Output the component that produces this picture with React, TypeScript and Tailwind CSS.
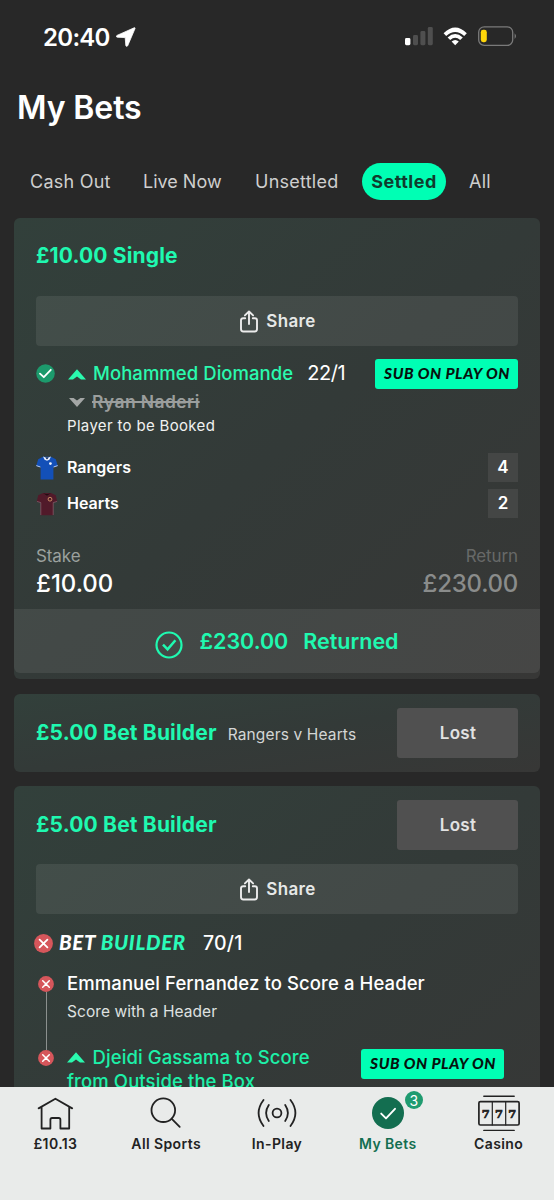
import React from 'react';

const LocationArrow = () => (
  <svg width="20" height="20" viewBox="0 0 20 20" className="ml-[6px]">
    <path d="M18.2 0.8L1 8.4C0 8.9 0.2 10.1 1.3 10.2L9.2 10.6L9.8 18.4C9.9 19.5 11.2 19.7 11.7 18.7L19 1.6C19.3 0.9 18.8 0.5 18.2 0.8Z" fill="#fff" stroke="#fff" strokeWidth="0.8" strokeLinejoin="round" />
  </svg>
);

const StatusIcons = () => (
  <svg width="112" height="22" viewBox="0 0 112 22">
    <rect x="0" y="12" width="5.4" height="7.2" rx="1.4" fill="#fff" />
    <rect x="8" y="9" width="5" height="10.2" rx="1.4" fill="#4f4f4f" />
    <rect x="15.4" y="5" width="5" height="14.2" rx="1.4" fill="#4f4f4f" />
    <rect x="22.8" y="1" width="5" height="18.2" rx="1.4" fill="#4f4f4f" />
    <path d="M38.6 7.2Q50.2 -4 61.8 7.2L59.2 9.9Q50.2 1.9 41.2 9.9Z" fill="#fff" />
    <path d="M42.6 11.4Q50.2 4.6 57.8 11.4L55.2 14.1Q50.2 9.6 45.2 14.1Z" fill="#fff" />
    <path d="M46.6 15.5Q50.2 12.4 53.8 15.5L50.2 19.2Z" fill="#fff" />
    <rect x="73.7" y="0.8" width="34" height="18.6" rx="5.5" fill="none" stroke="#7a7a7a" strokeWidth="1.3" />
    <path d="M109.6 7.2Q112.4 10 109.6 13Z" fill="#7a7a7a" />
    <rect x="75.8" y="3.8" width="6" height="12.4" rx="2.4" fill="#ffd60a" />
  </svg>
);

const ShareIcon = () => (
  <svg width="18" height="23" viewBox="0 0 18 23" fill="none" stroke="#ececec" strokeWidth="1.9" strokeLinecap="round" strokeLinejoin="round">
    <path d="M5.2 8.2H3.2C1.8 8.2 1 8.9 1 10.3V19C1 20.6 1.8 21.5 3.4 21.5H14.6C16.2 21.5 17 20.6 17 19V10.3C17 8.9 16.2 8.2 14.8 8.2H12.8" />
    <path d="M9 14V1.8M4.9 5.4L9 1.5L13.1 5.4" />
  </svg>
);

const UpArrow = () => (
  <svg width="18" height="11" viewBox="0 0 18 11" className="shrink-0">
    <path d="M9 0.3L18 10.4H13L9 7.6L5 10.4H0Z" fill="#2af9ae" />
  </svg>
);

const DownArrow = () => (
  <svg width="16" height="9" viewBox="0 0 16 9" className="shrink-0">
    <path d="M8 9L0 0H4.6L8 2.4L11.4 0H16Z" fill="#a3a6a5" />
  </svg>
);

const WonIcon = () => (
  <svg width="19" height="19" viewBox="0 0 19 19" className="-mt-[2px] shrink-0">
    <circle cx="9.5" cy="9.5" r="9.3" fill="#1c9a6c" />
    <path d="M4 9.6L7.8 13.2L14.8 5.8" fill="none" stroke="#fff" strokeWidth="1.8" strokeLinecap="round" strokeLinejoin="round" />
  </svg>
);

const LostIcon = ({ className }: { className: string }) => (
  <svg viewBox="0 0 19 19" className={className}>
    <circle cx="9.5" cy="9.5" r="9.4" fill="#d6565b" />
    <path d="M5.6 5.6L13.4 13.4M13.4 5.6L5.6 13.4" stroke="#fff" strokeWidth="1.8" strokeLinecap="round" />
  </svg>
);

const RangersKit = () => (
  <svg width="22" height="24" viewBox="0 0 22 24">
    <path d="M7 0.8L2.2 3.2L0.2 10L4.6 11.2V23.4H17.4V11.2L21.8 10L19.8 3.2L15 0.8Z" fill="#1350b8" />
    <path d="M7 0.6Q11 2.8 15 0.6L13.4 3.8L11 4.8L8.6 3.8Z" fill="#e8eefb" />
    <path d="M9.3 1.6H12.7L11 3.4Z" fill="#12264f" />
    <path d="M0.3 9.6L4.4 11M21.7 9.6L17.6 11" stroke="#c9d8f5" strokeWidth="0.9" />
    <circle cx="14.4" cy="7.6" r="1.4" fill="#eef3ff" />
  </svg>
);

const HeartsKit = () => (
  <svg width="22" height="24" viewBox="0 0 22 24">
    <path d="M7 1L2.2 3.2L0.8 9.6L4.8 10.6V23.2H17.2V10.6L21.2 9.6L19.8 3.2L15 1Z" fill="#511a2a" />
    <path d="M7 1Q11 3.2 15 1L11 3.8Z" fill="#230b12" />
    <path d="M0.9 9.4L4.8 10.6V23M21.1 9.4L17.2 10.6V23" stroke="#8f6070" strokeWidth="0.7" fill="none" />
    <circle cx="14" cy="7.2" r="1.9" fill="none" stroke="#c98a62" strokeWidth="1" />
  </svg>
);

const SubBadge = ({ className = '' }: { className?: string }) => (
  <span className={`flex h-[30px] w-[143px] shrink-0 items-center justify-center rounded-[3px] bg-[#00ffb4] pl-px font-['Lato'] text-[15.5px] font-black italic tracking-[0.5px] whitespace-nowrap text-[#07120e] ${className}`}>
    SUB ON PLAY ON
  </span>
);

const ShareButton = ({ className = '' }: { className?: string }) => (
  <button className={`flex h-[50px] w-full items-center justify-center gap-[8px] rounded-[4px] bg-white/8 pl-[2px] text-[17px] font-semibold tracking-[0.35px] text-[#e6e8e7] ${className}`}>
    <ShareIcon />
    <span className="pt-[2px]">Share</span>
  </button>
);

const LostButton = () => (
  <button className="ml-auto flex h-[50px] w-[121px] items-center justify-center rounded-[3px] bg-[#505050] pt-[2px] pl-px text-[17px] font-semibold tracking-[0.3px] text-[#e2e2e2]">
    Lost
  </button>
);

const teams = [
  { name: 'Rangers', score: 4, kit: <RangersKit /> },
  { name: 'Hearts', score: 2, kit: <HeartsKit /> },
];

const navItems = [
  {
    label: '£10.13',
    icon: (
      <svg width="44" height="38" viewBox="0 0 44 38" fill="none" stroke="#222" strokeWidth="1.8" strokeLinecap="round" strokeLinejoin="round">
        <path d="M5.6 14.4L22.4 4.7L39.2 14.4M8.6 13.2V34.5H17.4V25.7Q17.4 24 19.1 24H25.7Q27.4 24 27.4 25.7V34.5H36.2V13.2" />
      </svg>
    ),
  },
  {
    label: 'All Sports',
    icon: (
      <svg width="44" height="38" viewBox="0 0 44 38" fill="none" stroke="#222" strokeWidth="1.8" strokeLinecap="round">
        <circle cx="19.3" cy="16.2" r="11.8" />
        <path d="M27.8 24.8L35.7 32.8" />
      </svg>
    ),
  },
  {
    label: 'In-Play',
    icon: (
      <svg width="44" height="38" viewBox="0 0 44 38" fill="none" stroke="#222" strokeWidth="1.8" strokeLinecap="round">
        <circle cx="22" cy="19" r="4.4" />
        <path d="M13.8 11Q8.4 19 13.8 27M30.2 11Q35.6 19 30.2 27M8.5 6Q-1.3 19 8.5 32M35.5 6Q45.3 19 35.5 32" />
      </svg>
    ),
  },
  {
    label: 'My Bets',
    active: true,
    badge: 3,
    icon: (
      <svg width="44" height="38" viewBox="0 0 44 38">
        <circle cx="22" cy="19" r="16" fill="#136e50" />
        <path d="M15.2 19.6L20 24.4L29 14.8" fill="none" stroke="#fff" strokeWidth="1.9" strokeLinecap="round" strokeLinejoin="round" />
      </svg>
    ),
  },
  {
    label: 'Casino',
    icon: (
      <svg width="44" height="38" viewBox="0 0 44 38" fill="none" stroke="#222" strokeWidth="1.7" strokeLinecap="round">
        <path d="M6.8 2.2H37.2M6.8 36.4H37.2" strokeWidth="1.4" />
        <rect x="1.9" y="7.6" width="40.2" height="23.4" rx="1.5" />
        <path d="M15.3 7.6V31M28.7 7.6V31" strokeWidth="1.2" />
        <g fill="#222" stroke="#222" strokeWidth="0.7" className="font-['DejaVu_Serif',serif] text-[11.5px] font-bold tracking-normal" textAnchor="middle">
          <text x="8.7" y="23.6">7</text>
          <text x="22" y="23.6">7</text>
          <text x="35.3" y="23.6">7</text>
        </g>
      </svg>
    ),
  },
];

const cardClass = 'mx-[14px] rounded-[6px] bg-linear-to-br from-[#32403b] via-[#333a38] to-[#373736] text-white';

export default function App() {
  return (
    <div className="flex h-[1200px] w-[554px] flex-col overflow-hidden bg-[#282828] font-['Inter',sans-serif] whitespace-nowrap text-white">
      <div className="min-h-0 flex-1 overflow-hidden">
        {/* Status bar */}
        <div className="flex h-[74px] items-center pr-[37px] pl-[43px]">
          <span className="pt-[2px] text-[24px] font-semibold tracking-[-0.7px]">20:40</span>
          <LocationArrow />
          <div className="ml-auto">
            <StatusIcons />
          </div>
        </div>

        <h1 className="flex h-[67px] items-center pl-[17px] text-[32px] font-semibold tracking-[-0.1px]">My Bets</h1>

        {/* Tabs */}
        <div className="mt-[22px] flex h-[37px] items-center pl-[30px] text-[18px] tracking-[0.25px] text-[#cfcfcf]">
          <span className="w-[113px]">Cash Out</span>
          <span className="w-[112px] tracking-normal">Live Now</span>
          <span className="w-[107px]">Unsettled</span>
          <span className="flex h-full w-[84px] items-center justify-center rounded-full bg-[#00ffb4] font-bold tracking-[0.5px] text-[#103c2e]">Settled</span>
          <span className="ml-[23px]">All</span>
        </div>

        {/* Winning single */}
        <section className={`${cardClass} mt-[18px] overflow-hidden pb-[6px]`}>
          <div className="px-[22px]">
            <h2 className="flex h-[75px] items-center text-[21px] font-bold tracking-[0.15px] text-[#1ff9b0]">£10.00 Single</h2>
            <ShareButton className="mt-[3px]" />
            <div className="mt-[14px] flex h-[28px] items-center">
              <WonIcon />
              <span className="ml-[13px] flex items-center gap-[7px] text-[18.5px] font-medium tracking-[0.05px] text-[#2af9ae]">
                <UpArrow />
                Mohammed Diomande
              </span>
              <span className="-mt-[2px] ml-[14px] text-[20px] tracking-[-0.4px]">22/1</span>
              <SubBadge className="ml-auto" />
            </div>
            <div className="flex h-[28px] items-center gap-[7px] pl-[33px] text-[17.5px] font-semibold tracking-[0.42px] text-[#9b9e9d]">
              <DownArrow />
              <span className="line-through decoration-[1.5px]">Ryan Naderi</span>
            </div>
            <p className="flex h-[20px] items-center pl-[31px] text-[15px] tracking-[0.33px] text-[#f0f1f0]">Player to be Booked</p>
            <div className="mt-[17px] flex flex-col gap-[7px]">
              {teams.map(team => (
                <div key={team.name} className="flex h-[29px] items-center text-[16px] font-semibold">
                  {team.kit}
                  <span className="-mt-px ml-[9px]">{team.name}</span>
                  <span className="ml-auto flex h-full w-[30px] items-center justify-center bg-[#444645] text-[17px]">{team.score}</span>
                </div>
              ))}
            </div>
            <div className="mt-[30px] flex h-[18px] items-center justify-between text-[17px] tracking-[-0.1px]">
              <span className="text-[#9ba19e]">Stake</span>
              <span className="text-[#676968]">Return</span>
            </div>
            <div className="flex h-[43px] items-start justify-between text-[24px] leading-[36px] font-medium">
              <span>£10.00</span>
              <span className="tracking-[-0.25px] text-[#8a8c8b]">£230.00</span>
            </div>
          </div>
          <div className="flex h-[64px] items-center justify-center rounded-b-[6px] bg-white/8 text-[21.5px] font-semibold text-[#1ff9b0]">
            <svg width="28" height="28" viewBox="0 0 28 28" fill="none" stroke="#1ff9b0" strokeWidth="2.2" className="mt-[7px]">
              <circle cx="14" cy="14" r="12.5" />
              <path d="M8 13.6L12.6 18.4L20.4 9.2" strokeWidth="2.5" />
            </svg>
            <span className="ml-[16px]">£230.00</span>
            <span className="ml-[15px]">Returned</span>
          </div>
        </section>

        {/* Collapsed bet */}
        <section className={`${cardClass} mt-[15px] flex h-[78px] items-center px-[22px]`}>
          <h2 className="text-[21px] font-bold tracking-[0.17px] text-[#1ff9b0]">£5.00 Bet Builder</h2>
          <span className="mt-[3px] ml-[11px] text-[15.5px] tracking-[0.14px] text-[#d3d6d5]">Rangers v Hearts</span>
          <LostButton />
        </section>

        {/* Expanded bet builder */}
        <section className={`${cardClass} mt-[14px] h-[420px] px-[22px]`}>
          <div className="flex h-[78px] items-center">
            <h2 className="text-[21px] font-bold tracking-[0.17px] text-[#1ff9b0]">£5.00 Bet Builder</h2>
            <LostButton />
          </div>
          <ShareButton />
          <div className="mt-[14px] flex h-[30px] items-center">
            <LostIcon className="-ml-[2px] h-[19px] w-[19px]" />
            <span className="-mt-[2px] ml-[6px] w-[127px] font-['Lato',sans-serif] text-[20.5px] font-black tracking-[0.65px] italic">
              BET <span className="text-[#2afbb8]">BUILDER</span>
            </span>
            <span className="ml-[17px] pt-px text-[19.5px] font-medium tracking-[0.2px]">70/1</span>
          </div>
          <div className="mt-[13px] flex">
            <div className="flex w-[31px] flex-col items-start pl-[2px]">
              <LostIcon className="mt-[5px] h-[16px] w-[16px]" />
              <span className="ml-[7.5px] h-[58px] w-px bg-[#8b908e]" />
              <LostIcon className="h-[16px] w-[16px]" />
            </div>
            <div className="flex-1">
              <p className="flex h-[25px] items-center text-[18.5px] font-medium tracking-[0.09px]">Emmanuel Fernandez to Score a Header</p>
              <p className="mt-[6px] flex h-[20px] items-center text-[15.5px] tracking-[0.06px] text-[#dfe1e0]">Score with a Header</p>
              <div className="mt-[23px] flex">
                <p className="w-[294px] text-[18.5px] leading-[24px] font-medium tracking-[0.1px] text-[#1df0a8]">
                  <span className="mr-[7.5px] inline-block align-[1px]"><UpArrow /></span>
                  Djeidi Gassama to Score<br />from Outside the Box
                </p>
                <SubBadge className="mt-[4px]" />
              </div>
            </div>
          </div>
        </section>
      </div>

      {/* Bottom navigation */}
      <nav className="grid h-[113px] grid-cols-5 bg-[#e9ebea] pt-[7px] text-[14px] font-semibold tracking-[0.4px] text-[#222]">
        {navItems.map(item => (
          <div key={item.label} className={`flex flex-col items-center ${item.active ? 'text-[#136e50]' : ''}`}>
            <div className="relative">
              {item.icon}
              {item.badge && (
                <span className="absolute -top-[3px] left-[39px] flex h-[18px] w-[18px] items-center justify-center rounded-full bg-[#1f9b70] text-[14px] font-normal tracking-normal text-white">
                  {item.badge}
                </span>
              )}
            </div>
            <span className="mt-[2px] leading-[20px]">{item.label}</span>
          </div>
        ))}
      </nav>
    </div>
  );
}
